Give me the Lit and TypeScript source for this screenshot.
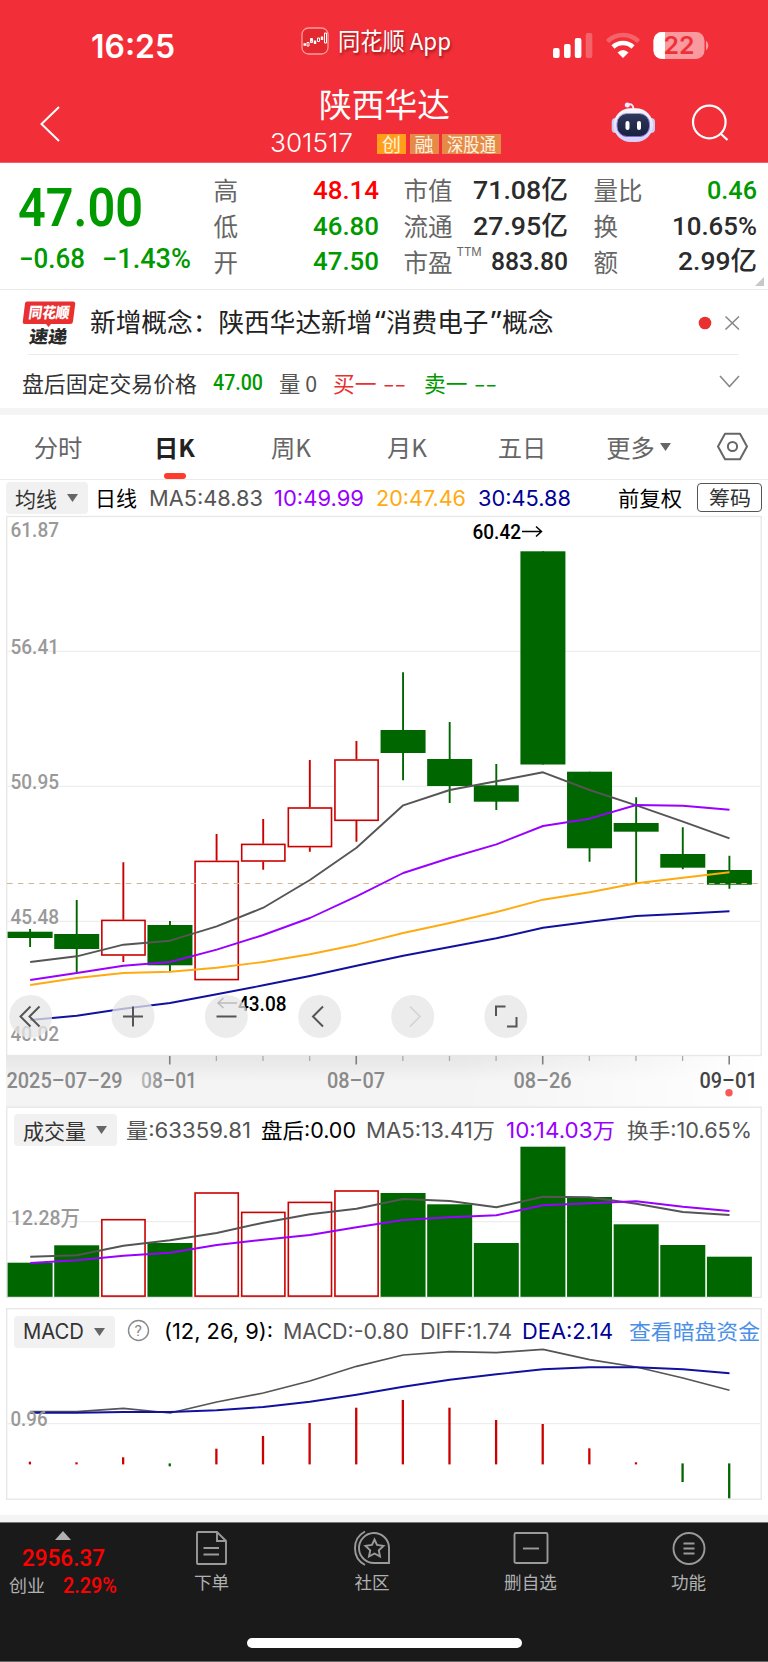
import { LitElement, html, svg, css } from "lit";
import { customElement, property } from "lit/decorators.js";

/** A single line of text condensed or widened to a given advance width. */
@customElement("fit-text")
class FitText extends LitElement {
  @property({ type: Number }) w = 0;
  @property() text = "";
  static styles = css`
    :host { display: inline-block; white-space: nowrap; flex: none; }
    span { display: inline-block; transform-origin: 0 50%; white-space: pre; }
  `;
  render() {
    return html`<span>${this.text}</span>`;
  }
  updated() {
    const el = this.renderRoot.querySelector("span") as HTMLElement;
    el.style.transform = "none";
    const n = el.getBoundingClientRect().width;
    this.style.width = this.w + "px";
    if (n > 0) el.style.transform = `scaleX(${this.w / n})`;
  }
}

const ft = (text: string, w: number, cls = "") =>
  html`<fit-text class=${cls} .text=${text} .w=${w}></fit-text>`;

const RED = "#cc0000";
const GREEN = "#006600";
const cx = (i: number) => 29.9 + 46.62 * i;

type Candle = [up: boolean, top: number, bottom: number, high: number, low: number];
const candles: Candle[] = [
  [false, 931.7, 938, 929, 947],
  [false, 934, 949, 900, 972.7],
  [true, 919.7, 955.7, 862.3, 962],
  [false, 925, 965.3, 921, 971.3],
  [true, 860.7, 980.3, 834, 980.3],
  [true, 843.7, 861.7, 819, 869.7],
  [true, 807.3, 847.3, 760, 851.7],
  [true, 759.3, 821, 741, 841.7],
  [false, 730, 753, 672.3, 780.3],
  [false, 759, 786, 722, 803],
  [false, 785.3, 801.7, 764, 810],
  [false, 551.3, 764.5, 551.3, 764.5],
  [false, 771.7, 848.3, 771.7, 861.7],
  [false, 823, 831.7, 797.3, 883.3],
  [false, 854, 867.7, 827.3, 869.3],
  [false, 870, 884.7, 855.7, 888.7],
];
const ma5 = [962, 956.3, 944.7, 940.7, 926.3, 907.7, 880, 847.7, 805.3, 790, 781.3, 772.3, 790, 805.3, 821.7, 838.3];
const ma10 = [980, 973, 965.7, 962, 949.7, 935, 918, 896.3, 873, 858, 844.3, 826, 818.7, 805, 805.7, 809.7];
const ma20 = [985, 978, 973, 971.7, 967.7, 962, 954.3, 944.7, 933, 923, 912, 899.7, 892.3, 883.3, 877.7, 872.3];
const ma30 = [1020, 1015.7, 1008.7, 1003, 994.3, 985.3, 976, 965.7, 955.7, 947, 938.3, 927.7, 921.7, 916, 913.7, 911.3];

const volTops = [1262.7, 1245.3, 1219, 1243, 1192.3, 1211.7, 1201.7, 1190.3, 1193, 1204.3, 1243, 1146.7, 1197, 1224.3, 1245, 1256.7];
const vol5 = [1256.7, 1255.3, 1245.7, 1240.3, 1233, 1222.7, 1214.3, 1208.7, 1199, 1201, 1207.3, 1196.7, 1197.3, 1203.7, 1212, 1215];
const vol10 = [1263, 1260.3, 1255.7, 1252.7, 1245, 1239.7, 1235, 1227.3, 1220, 1217.3, 1215.3, 1205.3, 1203.3, 1201.3, 1206.7, 1211];

const diff = [1411.7, 1411.7, 1408.3, 1413, 1402, 1393, 1381, 1366.3, 1355, 1351.7, 1352.7, 1349.3, 1359.7, 1367, 1378, 1390.3];
const dea = [1412.7, 1412.7, 1412, 1412, 1410.3, 1407, 1401.7, 1394.7, 1386.7, 1379.7, 1374.3, 1369.3, 1367.3, 1367.3, 1369.3, 1373.3];
const hist = [1461.7, 1462.3, 1457.3, 1466.3, 1448.7, 1436, 1423, 1407.7, 1400, 1407.7, 1420, 1424, 1448.3, 1462.3, 1482, 1498.3];

const line = (ys: number[], color: string, w = 1.9) =>
  svg`<polyline points=${ys.map((y, i) => `${(cx(i) + 0.3).toFixed(1)},${y}`).join(" ")} fill="none" stroke=${color} stroke-width=${w} stroke-linejoin="round"/>`;

const box = (i: number, up: boolean, top: number, bottom: number) =>
  up
    ? svg`<rect x=${cx(i) - 21.3} y=${top + 0.7} width="43.2" height=${bottom - top - 1.4} fill="#fff" stroke=${RED} stroke-width="1.600"/>`
    : svg`<rect x=${cx(i) - 22.3} y=${top} width="45" height=${bottom - top} fill=${GREEN}/>`;

const label = (x: number, y: number, t: string, w: number, cls = "axis", size = 21) =>
  svg`<text class=${cls} x=${x} y=${y} font-size=${size} textLength=${w} lengthAdjust="spacingAndGlyphs">${t}</text>`;

const grid = (y: number) => svg`<path d="M7 ${y}H761" stroke="#ededed" stroke-width="1.3"/>`;

const caret = html`<svg width="11" height="8" viewBox="0 0 11 8"><path d="M0 0H11L5.5 8Z" fill="#666"/></svg>`;

@customElement("app-root")
class AppRoot extends LitElement {
  static styles = css`
    :host {
      display: block; width: 768px; height: 1662px; overflow: hidden; background: #fff; color: #333;
      font-family: "Noto Sans CJK SC", sans-serif;
    }
    * { box-sizing: border-box; }
    svg { display: block; flex: none; overflow: visible; }
    .num { font-family: Roboto, "Noto Sans CJK SC", sans-serif; font-weight: 500; }
    .ui { font-family: Inter, "Noto Sans CJK SC", sans-serif; }
    .g { color: #009900; } .r { color: #ff0000; } .red { color: #e93030; }
    .row { display: flex; align-items: center; }

    .top { height: 163px; background: #f22f38; color: #fff; border-bottom: 1px solid #f0636a; }
    .status { height: 86px; padding: 8px 59px 0 91px; }
    .clock { font: 600 32px/40px Inter, sans-serif; margin-right: 126px; }
    .appname { font-size: 23.5px; line-height: 34px; margin: -15px 0 0 9px; text-shadow: 1px 2px 3px rgba(90,0,0,.6); }
    .appicon { margin-top: -13px; }
    .sig { margin: -2px 0 0 auto; }
    .nav { display: grid; grid-template-columns: 262px 244px 76px 74px 77px; height: 76px; }
    .back { padding: 20px 0 0 40px; }
    .title { text-align: center; padding-top: 0; }
    .name { font-size: 32.5px; line-height: 34px; }
    .code { display: flex; align-items: center; padding: 0 0 0 7px; height: 31px; margin-top: 5px; }
    .code .num { font-size: 25.5px; line-height: 26px; font-weight: 300; font-family: Inter; margin-right: 25px; }
    .tag { font-size: 19px; line-height: 17px; height: 20px; background: #e68a48; color: #fff3e0; padding: 0 5px 1px; margin: 2px 3.5px 0 0; flex: none; display: flex; align-items: center; }
    .tag.o { background: #ff9f1a; }

    .quote { height: 127px; border-bottom: 1.5px solid #e9e9e9; display: grid; grid-template-columns: 213px 165px 25px 164px 26px 163px 12px; position: relative; }
    .price { padding: 19px 0 0 18px; }
    .price .big { font-size: 54.5px; line-height: 51px; display: block; font-weight: 600; }
    .chg { padding: 10px 0 0 1px; display: flex; gap: 17px; font-size: 27px; line-height: 32px; }
    .col { padding: 9px 0 0 .5px; }
    .kv { display: flex; justify-content: space-between; align-items: center; height: 35.7px; font-size: 24.5px; color: #666; }
    .kv .num { font-size: 26.5px; line-height: 36px; margin-right: -1px; }
    .dark { color: #2b2b2b; }
    .kv sup { font: 11.5px/12px Inter, sans-serif; margin: -18px auto 0 4px; align-self: center; }
    .fold { position: absolute; right: 4px; bottom: 3px; }

    .news { height: 64px; padding: 1px 28px 0 22px; }
    .headline { font-size: 25.6px; line-height: 38px; margin: -4px 0 0 14px; color: #222; }
    .rule { height: 1.4px; background: #ececec; margin: 0 29px 0 28px; }
    .after { height: 52.6px; padding: 0 28px 0 22px; font-size: 22px; line-height: 30px; }
    .after .num { position: relative; top: 1.5px; }
    .band { height: 7px; background: #f4f4f4; }

    .tabs { height: 65px; border-bottom: 1.5px solid #ececec; display: grid; grid-template-columns: 116px 117px 116px 116px 114px 119px 1fr; font-size: 24.3px; color: #666; line-height: 64px; }
    .tab { display: flex; justify-content: center; align-items: center; gap: 5px; height: 64px; position: relative; }
    .tab.on { color: #222; font-weight: 700; }
    .tab.on::after { content: ""; position: absolute; bottom: 0; width: 22px; height: 5.5px; border-radius: 3px; background: #ff3b30; }

    .ma { height: 36px; padding: 0 6px 0 6px; font-size: 21px; line-height: 32px; }
    .ma > fit-text, .legend > fit-text { margin-top: -2px; }
    .ma > .ui, .legend > .ui { margin-top: 2px; }
    .chip { display: flex; align-items: center; gap: 10px; height: 32px; background: #f1f1f1; border-radius: 4px; padding: 0 9.5px 0 9px; color: #333; flex: none; font-size: 21px; line-height: 30px; }
    .blk { color: #000; } .gry { color: #555; } .pur { color: #9900ff; } .yel { color: #ffaa11; } .blu { color: #000099; }
    .chips { margin-left: 15px; border: 1.4px solid #555; border-radius: 4px; height: 29px; width: 65px; display: flex; justify-content: center; align-items: center; line-height: 25px; font-size: 20.5px; color: #333; }

    .axisband { height: 51px; background: linear-gradient(90deg, rgba(255,255,255,0) 60%, #fff 100%), linear-gradient(180deg, #e6e6e6, #f4f4f4 50%); margin: 0 7px 0 6px; }
    .axisband svg { margin-left: -6px; }
    text { font-family: Roboto, "Noto Sans CJK SC", sans-serif; }
    .axis { fill: #999; font-weight: 500; } .date { fill: #8a8a8a; font-weight: 500; } .today { fill: #444; font-weight: 500; } .peak { fill: #000; font-weight: 500; }

    .panel { display: grid; }
    .panel > * { grid-area: 1 / 1; }
    .legend { align-self: start; z-index: 1; height: 32px; margin: 7px 0 0 14px; font-size: 21px; line-height: 32px; }
    .link { color: #4a90e8; }
    .gap { height: 14px; }
    .lower { margin-top: 9px; }

    .foot { height: 140px; background: #1a1a1a; border-top: 1px solid #777; border-bottom: 1px solid #666; color: #b0b0b0; display: grid; grid-template-rows: 84px 1fr; justify-items: center; }
    .dock { display: grid; width: 768px; grid-template-columns: 131px 160px 161px 156px 160px; }
    .idx { display: flex; flex-direction: column; padding-top: 8px; }
    .item { display: flex; flex-direction: column; align-items: center; padding: 7px 0 0 1px; font-size: 17.6px; line-height: 22px; gap: 5px; }
    .home { width: 275px; height: 10px; border-radius: 5px; background: #fff; margin-top: 31px; }
    .idx svg { margin-left: 55px; }
    .idx .v { font-size: 24px; line-height: 28px; margin: 4px 0 0 22px; color: #f00; }
    .idx .s { display: flex; align-items: center; gap: 18px; margin-left: 9px; font-size: 17.5px; line-height: 24px; }
    .idx .s .num { color: #f00; font-size: 21.5px; margin-top: 2px; }
  `;

  kv(k: string, v: string, w: number, cls: string, sup = "") {
    return html`<div class="kv"><span>${k}</span>${sup ? html`<sup>${sup}</sup>` : ""}${ft(v, w, "num " + cls)}</div>`;
  }

  top() {
    return html`<div class="top">
      <div class="status row">
        ${ft("16:25", 84, "clock")}
        <svg class="appicon" width="28" height="28" viewBox="0 0 28 28">
          <rect x="1" y="1" width="26" height="26" rx="6.5" fill="#e3282f" stroke="#ff9a9a" stroke-width="1.3"/>
          <path d="M2.500 17.500H5M10.500 11V14.500M14 13.500V17M21 9.500V13" stroke="#fff" stroke-width="2.400"/>
          <path d="M6 15.500H8V19H6ZM9.500 12H11.500V15.500H9.500ZM16.500 11H18.500V14.500H16.500ZM23.500 6H25.500V16H23.500Z" fill="none" stroke="#fff"/>
        </svg>
        ${ft("同花顺 App", 113, "appname")}
        <svg class="sig" width="156" height="30" viewBox="553 31 156 30">
          <rect x="553" y="48" width="6.600" height="10" rx="2" fill="#fff"/>
          <rect x="564" y="44" width="6.600" height="14" rx="2" fill="#fff"/>
          <rect x="574.800" y="38" width="6.600" height="20" rx="2" fill="#fff"/>
          <rect x="585.700" y="33" width="6.600" height="25" rx="2" fill="#fff" opacity=".25"/>
          <path d="M607.500 41.500A22 22 0 0 1 638.500 41.500" stroke="#fff" stroke-width="4.500" fill="none" opacity=".25"/>
          <path d="M613 47A14.500 14.500 0 0 1 633 47" stroke="#fff" stroke-width="4.500" fill="none"/>
          <path d="M617.500 52.500Q623 47.500 628.500 52.500L623 58Z" fill="#fff"/>
          <rect x="653.500" y="32" width="51" height="27" rx="8.500" fill="#f99a9e"/>
          <path d="M665 32H662A8.500 8.500 0 0 0 653.500 40.500V50.500A8.500 8.500 0 0 0 662 59H665Z" fill="#fff"/>
          <path d="M706.500 41.500Q709.500 45.500 706.500 49.500Z" fill="#f99a9e" stroke="#f99a9e"/>
          <text x="663.500" y="54.200" font-size="24.500" textLength="31" lengthAdjust="spacingAndGlyphs" style="font-family:Inter" font-weight="600" fill="#ef3039">22</text>
        </svg>
      </div>
      <div class="nav">
        <div class="back"><svg width="20" height="36" viewBox="0 0 20 36"><path d="M19 1L1.500 18L19 35" fill="none" stroke="#fff" stroke-width="2"/></svg></div>
        <div class="title">
          ${ft("陕西华达", 131, "name")}
          <div class="code">${ft("301517", 83, "num")}<span class="tag o">创</span><span class="tag">融</span><span class="tag">${ft("深股通", 49)}</span></div>
        </div>
        <div></div>
        <svg width="74" height="76" viewBox="582 86 74 76">
          <defs><linearGradient id="face" x1="0" y1="0" x2="0" y2="1"><stop offset="0" stop-color="#30385c"/><stop offset="1" stop-color="#18213f"/></linearGradient>
          <linearGradient id="rim" x1="0" y1="0" x2="0" y2="1"><stop offset="0" stop-color="#9fa3c8"/><stop offset="1" stop-color="#8b5cf6"/></linearGradient>
          <linearGradient id="head" x1="0" y1="0" x2="0" y2="1"><stop offset="0" stop-color="#faf7ff"/><stop offset="1" stop-color="#d0d2f8"/></linearGradient></defs>
          <path d="M627.500 105Q633 102.500 633.500 109" stroke="#f0eaff" stroke-width="2" fill="none"/>
          <circle cx="627.300" cy="105" r="2.500" fill="#eee9ff"/>
          <rect x="611.700" y="118" width="8" height="15" rx="4" fill="#c9cdf2"/><rect x="647" y="118" width="8" height="15" rx="4" fill="#c9cdf2"/>
          <rect x="613.500" y="108.300" width="39.500" height="33.700" rx="17" fill="url(#head)"/>
          <rect x="617" y="113.500" width="32.500" height="23" rx="10" fill="url(#face)" stroke="url(#rim)" stroke-width="1"/>
          <rect x="625.500" y="121" width="4" height="9" rx="2" fill="#fff"/><rect x="637" y="121" width="4" height="9" rx="2" fill="#fff"/>
        </svg>
        <svg width="77" height="76" viewBox="656 86 77 76"><circle cx="709.300" cy="122" r="16.300" fill="none" stroke="#fff" stroke-width="2.200"/><path d="M720.500 133.500L727.500 140" stroke="#fff" stroke-width="2.200"/></svg>
      </div>
    </div>`;
  }

  quote() {
    return html`<div class="quote">
      <div class="price">${ft("47.00", 125, "num big g")}
        <div class="chg">${ft("−0.68", 66, "num g")}${ft("−1.43%", 89, "num g")}</div>
      </div>
      <div class="col">${this.kv("高", "48.14", 66, "r")}${this.kv("低", "46.80", 66, "g")}${this.kv("开", "47.50", 66, "g")}</div>
      <i></i>
      <div class="col">${this.kv("市值", "71.08亿", 95, "dark")}${this.kv("流通", "27.95亿", 95, "dark")}${this.kv("市盈", "883.80", 77, "dark", "TTM")}</div>
      <i></i>
      <div class="col">${this.kv("量比", "0.46", 50, "g")}${this.kv("换", "10.65%", 85, "dark")}${this.kv("额", "2.99亿", 79, "dark")}</div>
      <svg class="fold" width="9" height="9" viewBox="0 0 9 9"><path d="M9 0V9H0Z" fill="#c8c8c8"/></svg>
    </div>`;
  }

  news() {
    return html`<div class="news row">
        <svg width="54" height="46" viewBox="22 298 54 46">
          <path d="M27 299.500H73Q75.500 299.500 75.200 302L73 319.500Q72.700 322 70 322H51L48.500 325L46 322H25Q22.500 322 22.800 319.500L25 301.500Q25.200 299.500 27 299.500Z" fill="#e93030"/>
          <g transform="skewX(-8)" font-weight="900">
            <text x="72.500" y="316.300" font-size="15" textLength="41" lengthAdjust="spacingAndGlyphs" style="font-family:'Noto Sans CJK SC'" fill="#fff">同花顺</text>
            <text x="76.500" y="341" font-size="17.500" textLength="38" lengthAdjust="spacingAndGlyphs" style="font-family:'Noto Sans CJK SC'" fill="#2a2a2a">速递</text>
          </g>
        </svg>
        <div class="headline row">${ft("新增概念：陕西华达新增", 282.500)}${ft("“", 13.500, "ui")}${ft("消费电子", 102.500)}${ft("”", 13.500, "ui")}${ft("概念", 51.500)}</div>
        <svg style="margin-left:auto" width="42" height="16" viewBox="0 0 42 16"><circle cx="7" cy="8" r="6.300" fill="#e93030"/><path d="M27.500 1.500L41 14.500M41 1.500L27.500 14.500" stroke="#888" stroke-width="1.600"/></svg>
      </div>
      <div class="rule"></div>
      <div class="after row">
        ${ft("盘后固定交易价格", 175)}
        <span style="width:16px"></span>${ft("47.00", 50, "num g")}
        <span style="width:15.500px"></span>${ft("量 0", 38, "gry")}
        <span style="width:16px"></span>${ft("买一", 43.5, "red")}<span style="width:6.500px"></span>${ft("--", 23, "red")}
        <span style="width:18px"></span>${ft("卖一", 43.5, "g")}<span style="width:6.500px"></span>${ft("--", 23, "g")}
        <svg style="margin-left:auto" width="21" height="13" viewBox="0 0 21 13"><path d="M1 1L10.500 11.500L20 1" fill="none" stroke="#888" stroke-width="1.600"/></svg>
      </div>
      <div class="band"></div>`;
  }

  tabs() {
    const names = ["分时", "日K", "周K", "月K", "五日"];
    return html`<div class="tabs">
      ${names.map((n, i) => html`<div class="tab ${i === 1 ? "on" : ""}">${n}</div>`)}
      <div class="tab"><span>更多</span>${caret}</div>
      <div class="tab"><svg style="margin-left:-2px" width="32" height="28" viewBox="-0.500 0.500 32 28"><path d="M8.500 1.200H23.500L30.500 14L23.500 26.800H8.500L1.500 14Z" fill="none" stroke="#666" stroke-width="2" stroke-linejoin="round"/><circle cx="16" cy="14" r="4.600" fill="none" stroke="#666" stroke-width="2"/></svg></div>
    </div>
    <div class="ma row">
      <div class="chip">${ft("均线", 42)}${caret}</div>
      <span style="width:7.500px"></span>${ft("日线", 42, "blk")}
      <span style="width:12px"></span>${ft("MA5:48.83", 114, "ui gry")}
      <span style="width:11px"></span>${ft("10:49.99", 90, "ui pur")}
      <span style="width:11.500px"></span>${ft("20:47.46", 90, "ui yel")}
      <span style="width:12px"></span>${ft("30:45.88", 93, "ui blu")}
      <span style="margin-left:auto"></span>${ft("前复权", 64, "blk")}
      <div class="chips">${ft("筹码", 42)}</div>
    </div>`;
  }

  chart() {
    const bx = [30.7, 133, 226.3, 319.7, 412.7, 505.8];
    return html`<svg width="768" height="540" viewBox="0 516 768 540">
        <rect x="6.700" y="516.500" width="754.500" height="539" fill="none" stroke="#e8e8e8" stroke-width="1.400"/>
        ${[651.3, 786.3, 921.3].map(grid)}
        ${label(10.5, 537.3, "61.87", 48.5)}${label(10.5, 654.3, "56.41", 48.5)}${label(10.5, 789, "50.95", 48.5)}${label(10.5, 924, "45.48", 48.5)}${label(10.5, 1041, "40.02", 48.5)}
        ${candles.map(([up, t, b, h, l], i) => svg`
          <path d="M${cx(i) + 0.2} ${h}V${up ? t : b}M${cx(i) + 0.2} ${up ? b : t}V${l}" stroke=${up ? RED : GREEN} stroke-width="1.900"/>
          ${box(i, up, t, b)}`)}
        <path d="M7 883.500H761" stroke="#d8b48c" stroke-width="1.200" stroke-dasharray="5.500 5.300"/>
        ${line(ma5, "#555")}${line(ma10, "#9900ff")}${line(ma20, "#ffaa11")}${line(ma30, "#1111a0")}
        ${label(472.5, 539, "60.42", 48.5, "peak")}
        <path d="M522 531.500H541.500M536 526.500L541.500 531.500L536 536.500" fill="none" stroke="#000" stroke-width="1.500"/>
        ${label(238, 1010.700, "43.08", 48.5, "peak")}
        <path d="M237 1003H218M223.500 998L218 1003L223.500 1008" fill="none" stroke="#333" stroke-width="1.500"/>
        ${bx.map((x) => svg`<circle cx=${x} cy="1016.400" r="21.500" fill="#e6e6e6" fill-opacity=".76"/>`)}
        <g fill="none" stroke="#555" stroke-width="2">
          <path d="M30.500 1006.500L20.500 1016.500L30.500 1026.500M39.500 1006.500L29.500 1016.500L39.500 1026.500"/>
          <path d="M123 1016.400H143M133 1006.400V1026.400M216.500 1016.400H236.500"/>
          <path d="M323 1006.500L313 1016.500L323 1026.500"/>
          <path d="M410 1006.500L420 1016.500L410 1026.500" stroke="#d2d2d2" stroke-width="1.500"/>
          <path d="M496 1016V1006.500H505.500M507 1026.500H516.500V1017"/>
        </g>
      </svg>
      <div class="axisband"><svg width="768" height="51" viewBox="0 1056 768 51">
        <defs><linearGradient id="fade"><stop offset="0" stop-color="#bbb"/><stop offset=".4" stop-color="#8a8a8a"/></linearGradient></defs>
        ${candles.map((_, i) => i < 3 ? "" : (i - 3) % 4 === 0
          ? svg`<path d="M${cx(i)} 1056V1064.500" stroke="#808080" stroke-width="1.600"/>`
          : svg`<path d="M${cx(i)} 1056V1061" stroke="#aaa" stroke-width="1.300"/>`)}
        ${label(6.5, 1087.5, "2025–07–29", 116, "date", 22)}
        <text x="141" y="1087.500" font-size="22" font-weight="500" textLength="56" lengthAdjust="spacingAndGlyphs" fill="url(#fade)">08–01</text>
        ${label(327, 1087.5, "08–07", 58, "date", 22)}${label(513.5, 1087.5, "08–26", 58, "date", 22)}${label(699.5, 1087.5, "09–01", 58, "today", 22)}
        <circle cx="729" cy="1092.700" r="3.700" fill="#f55a5a"/>
      </svg></div>`;
  }

  volume() {
    return html`<div class="panel">
      <svg width="768" height="192" viewBox="0 1107 768 192">
        <rect x="6.700" y="1107.200" width="754.500" height="190.200" fill="none" stroke="#e8e8e8" stroke-width="1.400"/>
        ${grid(1221.7)}${label(11, 1224.7, "12.28万", 69)}
        ${volTops.map((t, i) => box(i, [2, 4, 5, 6, 7].includes(i), t, 1296.8))}
        ${line(vol5, "#555")}${line(vol10, "#9900ff")}
      </svg>
      <div class="legend row">
        <div class="chip">${ft("成交量", 63)}${caret}</div>
        <span style="width:9.500px"></span>${ft("量:63359.81", 125, "ui gry")}
        <span style="width:10px"></span>${ft("盘后:0.00", 95, "ui blk")}
        <span style="width:10px"></span>${ft("MA5:13.41万", 129, "ui gry")}
        <span style="width:11px"></span>${ft("10:14.03万", 109, "ui pur")}
        <span style="width:12px"></span>${ft("换手:10.65%", 125, "ui gry")}
      </div>
    </div>`;
  }

  macd() {
    return html`<div class="panel lower">
      <svg width="768" height="193" viewBox="0 1308 768 193">
        <rect x="6.700" y="1308.700" width="754.500" height="190.500" fill="none" stroke="#e8e8e8" stroke-width="1.400"/>
        ${grid(1423.7)}
        ${line(diff, "#555", 1.7)}${line(dea, "#1111a0")}
        ${label(10.5, 1426, "0.96", 37)}
        ${hist.map((y, i) => {
          const down = i === 3 || i > 13;
          return svg`<path d="M${cx(i)} ${down ? 1463.4 : 1464.4}V${y}" stroke=${down ? GREEN : RED} stroke-width="2.300"/>`;
        })}
      </svg>
      <div class="legend row">
        <div class="chip ui">${ft("MACD", 61)}${caret}</div>
        <svg style="margin:0 14px 0 12px" width="23" height="23" viewBox="0 0 23 23"><circle cx="11.500" cy="11.500" r="10" fill="none" stroke="#8a8a8a" stroke-width="1.400"/><text x="7.500" y="17" font-size="15.500" fill="#888">?</text></svg>
        ${ft("(12, 26, 9):", 109, "ui blk")}
        <span style="width:10.500px"></span>${ft("MACD:-0.80", 126, "ui gry")}
        <span style="width:11px"></span>${ft("DIFF:1.74", 92, "ui gry")}
        <span style="width:10px"></span>${ft("DEA:2.14", 91, "ui blu")}
        <span style="width:16px"></span>${ft("查看暗盘资金", 131, "link")}
      </div>
    </div>
    <div class="gap"></div>
    <div class="band"></div>`;
  }

  foot() {
    const st = "fill:none;stroke:#9a9a9a;stroke-width:1.900";
    return html`<div class="foot">
      <div class="dock">
        <div class="idx">
          <svg width="16" height="9" viewBox="0 0 16 9"><path d="M0 9H16L8 0Z" fill="#b0b0b0"/></svg>
          ${ft("2956.37", 83, "num v")}
          <div class="s">${ft("创业", 36)}${ft("2.29%", 54, "num")}</div>
        </div>
        <div class="item"><svg width="36" height="36" viewBox="0 0 36 36" style=${st}><path d="M3 3Q3 2 4 2H23L32 11V33Q32 34 31 34H4Q3 34 3 33ZM23 2V11H32M9.500 18H25M9.500 24.500H25"/></svg>下单</div>
        <div class="item"><svg width="36" height="36" viewBox="0 0 36 36" style=${st}><path d="M35 33H21A15 15 0 1 1 35 18V33ZM11 1.500A19 19 0 0 0 11 35"/><path d="M20.500 9.500L23 15L29.500 15.900L24.800 20.300L26 26.500L20.500 23.500L15 26.500L16.200 20.300L11.500 15.900L18 15Z"/></svg>社区</div>
        <div class="item"><svg width="36" height="36" viewBox="0 0 36 36" style=${st}><rect x="1.500" y="3" width="33" height="30" rx="1.500"/><path d="M10 18.500H26"/></svg>删自选</div>
        <div class="item"><svg width="36" height="36" viewBox="0 0 36 36" style=${st}><circle cx="18" cy="18.500" r="15.500"/><path d="M12.500 13.500H23.500M12.500 18.500H23.500M12.500 23.500H23.500"/></svg>功能</div>
      </div>
      <div class="home"></div>
    </div>`;
  }

  render() {
    return html`${this.top()}${this.quote()}${this.news()}${this.tabs()}${this.chart()}${this.volume()}${this.macd()}${this.foot()}`;
  }
}
